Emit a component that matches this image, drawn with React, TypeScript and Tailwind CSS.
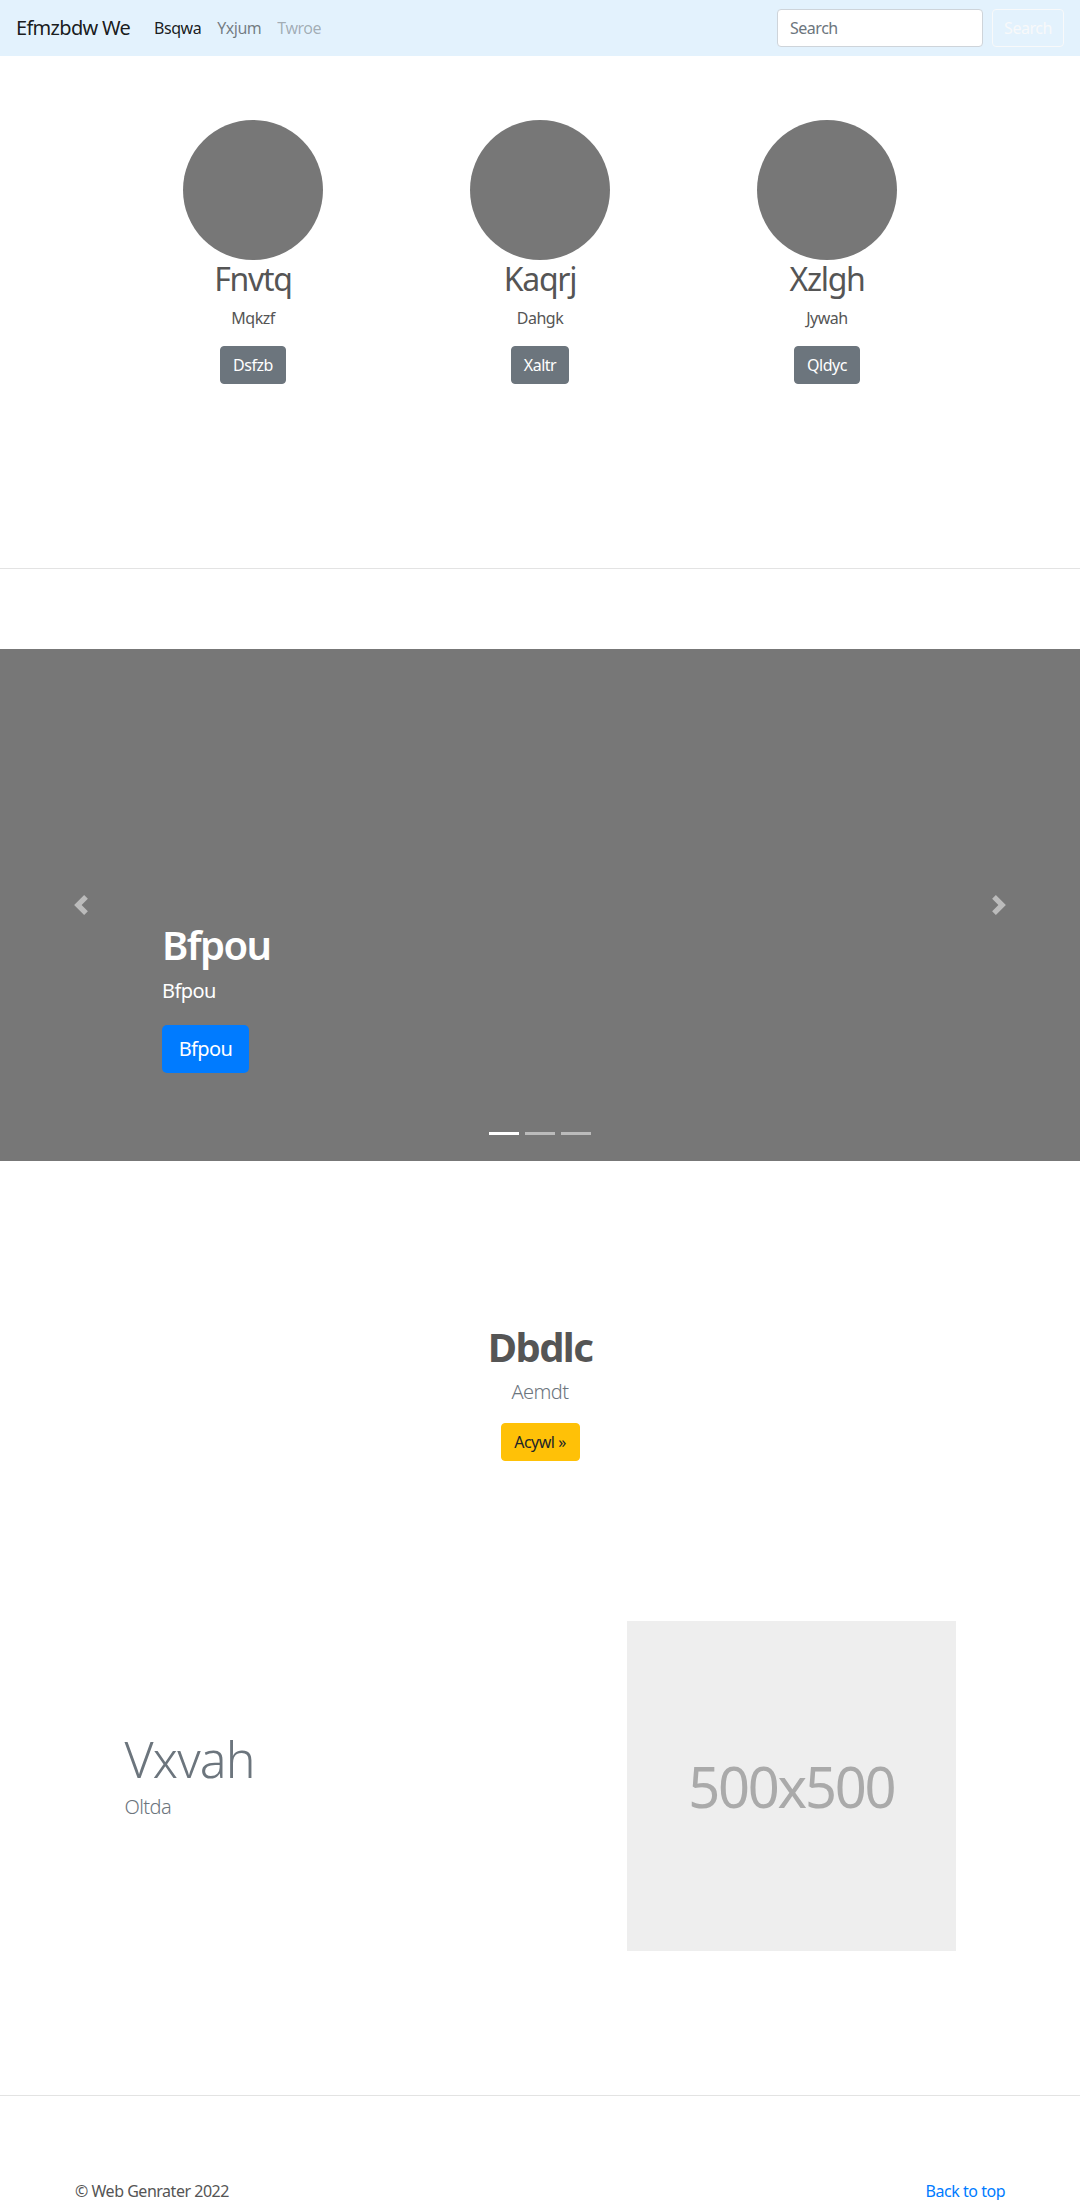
import React from "react";

const font = "font-['Noto_Sans',sans-serif]";

function Chevron({ dir }: { dir: "prev" | "next" }) {
  return (
    <svg width="20" height="20" viewBox="0 0 8 8" fill="#fff">
      {dir === "prev" ? (
        <path d="M5.25 0l-4 4 4 4 1.5-1.5L4.25 4l2.5-2.5L5.25 0z" />
      ) : (
        <path d="M2.75 0l-1.5 1.5L3.75 4l-2.5 2.5L2.75 8l4-4-4-4z" />
      )}
    </svg>
  );
}

const people = [
  { name: "Fnvtq", sub: "Mqkzf", btn: "Dsfzb" },
  { name: "Kaqrj", sub: "Dahgk", btn: "Xaltr" },
  { name: "Xzlgh", sub: "Jywah", btn: "Qldyc" },
];

export default function App() {
  return (
    <div className={`${font} min-h-[2200px] bg-white text-[#212529]`}>
      {/* Navbar */}
      <nav className="h-14 bg-[#e3f2fd] flex items-center px-4">
        <a className="text-[20px] leading-[30px] tracking-[-0.035em] text-black/90 mr-4">Efmzbdw We</a>
        <ul className="flex items-center text-[16px] leading-6 tracking-[-0.03em]">
          <li className="px-2 text-black/90">Bsqwa</li>
          <li className="px-2 text-black/50">Yxjum</li>
          <li className="px-2 text-black/30">Twroe</li>
        </ul>
        <div className="ml-auto flex items-center">
          <input
            className="w-[206px] h-[38px] rounded border border-[#ced4da] bg-white px-3 text-[16px] tracking-[-0.03em] placeholder:text-[#6c757d] outline-none"
            placeholder="Search"
          />
          <button className="ml-[9px] w-[72px] h-[38px] rounded border border-[#f8f9fa] text-[#f8f9fa] text-[16px] tracking-[-0.03em]">
            Search
          </button>
        </div>
      </nav>

      {/* Marketing circles */}
      <section className="h-[512px] pt-16">
        <div className="w-[861px] mx-auto grid grid-cols-3">
          {people.map((p) => (
            <div key={p.name} className="px-[15px] text-center">
              <div className="w-[140px] h-[140px] rounded-full bg-[#777] mx-auto" />
              <h2 className="text-[32px] leading-[38px] font-normal tracking-[-0.04em] text-[#555] mb-2">{p.name}</h2>
              <p className="text-[16px] leading-6 tracking-[-0.03em] text-[#555] mb-4">{p.sub}</p>
              <button className="h-[38px] px-3 rounded bg-[#6c757d] border border-[#6c757d] text-white text-[16px] tracking-[-0.03em]">
                {p.btn}
              </button>
            </div>
          ))}
        </div>
      </section>

      <hr className="border-0 border-t border-[#e3e3e3]" />

      {/* Carousel */}
      <div className="mt-[80px] relative h-[512px] bg-[#777] overflow-hidden">
        <div className="absolute left-0 top-0 bottom-0 w-[15%] flex items-center justify-center opacity-50">
          <Chevron dir="prev" />
        </div>
        <div className="absolute right-0 top-0 bottom-0 w-[15%] flex items-center justify-center opacity-50">
          <Chevron dir="next" />
        </div>
        <div className="absolute left-[15%] right-[15%] bottom-[88px] text-white">
          <h1 className="text-[40px] leading-[48px] font-semibold tracking-[-0.04em] mb-[7px]">Bfpou</h1>
          <p className="text-[20px] leading-[30px] tracking-[-0.03em] mb-[19px]">Bfpou</p>
          <button className="h-[48px] w-[87px] rounded-[5px] bg-[#007bff] text-white text-[20px] tracking-[-0.03em]">Bfpou</button>
        </div>
        <div className="absolute bottom-[26px] left-0 right-0 flex justify-center gap-[6px]">
          <span className="w-[30px] h-[3px] bg-white" />
          <span className="w-[30px] h-[3px] bg-white/50" />
          <span className="w-[30px] h-[3px] bg-white/50" />
        </div>
      </div>

      {/* Center text */}
      <div className="mt-[162px] text-center">
        <h2 className="text-[40px] leading-[48px] font-bold tracking-[-0.04em] text-[#555] mb-[6px]">Dbdlc</h2>
        <p className="text-[20px] leading-[30px] font-light tracking-[-0.03em] text-[#6c757d] mb-4">Aemdt</p>
        <button className="h-[38px] w-[79px] rounded bg-[#ffc107] border border-[#ffc107] text-[#212529] text-[16px] tracking-[-0.03em]">
          Acywl »
        </button>
      </div>

      {/* Featurette */}
      <div className="mt-[160px] w-[861px] mx-auto grid grid-cols-12 items-center">
        <div className="col-span-7 px-[15px]">
          <h2 className="text-[50px] leading-[50px] font-light tracking-[-0.8px] text-[#6c757d] mb-2">Vxvah</h2>
          <p className="text-[20px] leading-[30px] font-light tracking-[-0.03em] text-[#6c757d] mb-4">Oltda</p>
        </div>
        <div className="col-span-5 px-[15px]">
          <div className="w-[329px] h-[330px] bg-[#eee] flex items-center justify-center text-[#aaa] text-[56px] tracking-[-0.04em]">
            500x500
          </div>
        </div>
      </div>

      <hr className="mt-[144px] border-0 border-t border-[#e3e3e3]" />

      {/* Footer */}
      <footer className="w-[930px] mx-auto pt-[83px] flex justify-between text-[16px] leading-6 tracking-[-0.03em]">
        <p className="text-[#555]">© Web Genrater 2022</p>
        <a className="text-[#007bff]">Back to top</a>
      </footer>
    </div>
  );
}
